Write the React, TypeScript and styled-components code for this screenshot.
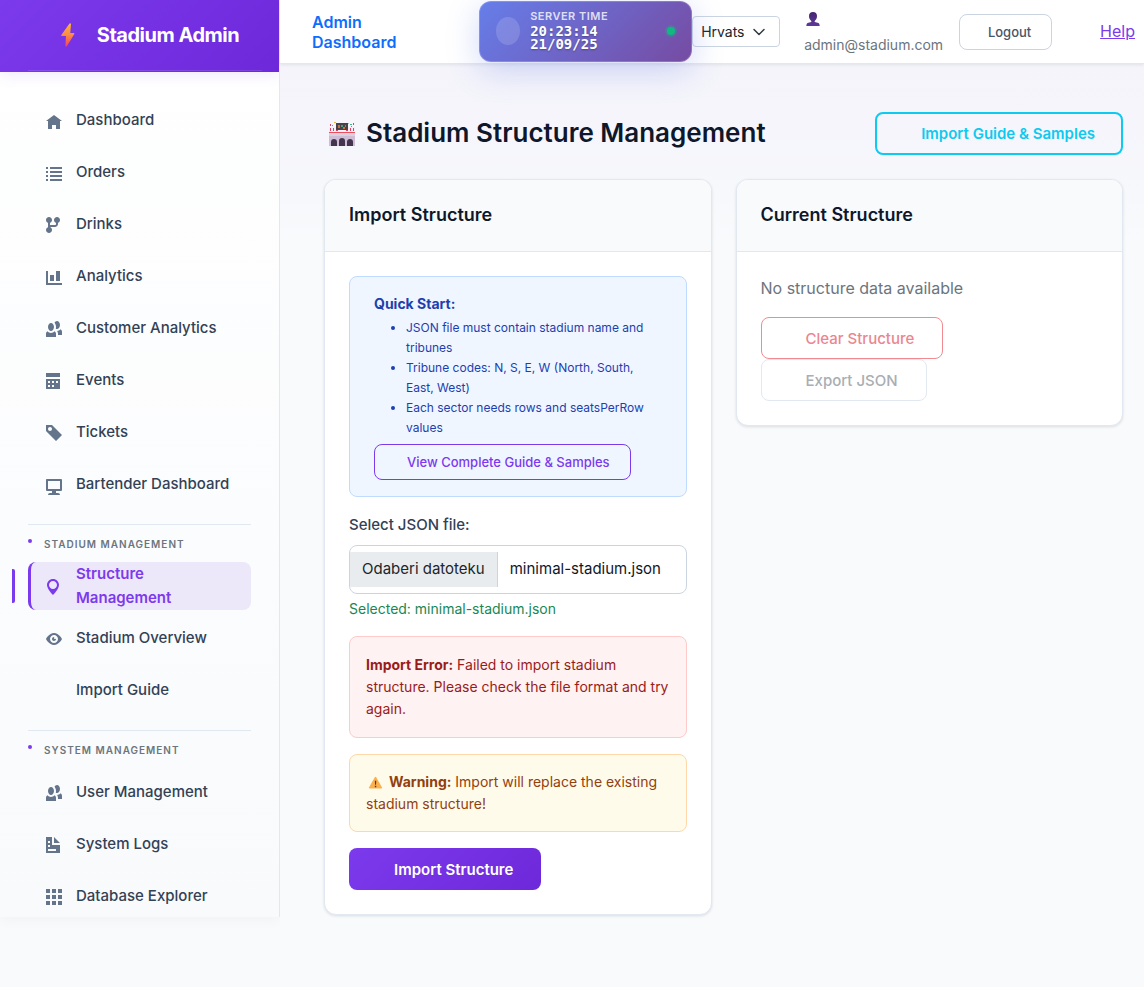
import React from "react";
import styled, { createGlobalStyle, css } from "styled-components";

const GlobalStyle = createGlobalStyle`
  *, *::before, *::after { box-sizing: border-box; }
  body {
    margin: 0;
    background: #f8fafc;
    color: #0f172a;
    font: 400 16px/24px Inter, "Liberation Sans", sans-serif;
  }
  button, select, input { font-family: inherit; }
`;

const Shell = styled.div`
  display: flex;
  align-items: flex-start;
  min-height: 100vh;
`;

const Sidebar = styled.aside`
  flex: none;
  width: 280px;
  height: calc(100vh - 70px);
  overflow: hidden;
  background: linear-gradient(180deg, #ffffff 0%, #f8fafc 100%);
  border-right: 1px solid #e2e8f0;
  box-shadow: 0 4px 12px rgba(15, 23, 42, 0.03);
`;

const Brand = styled.a`
  position: relative;
  display: flex;
  align-items: center;
  justify-content: center;
  gap: 16px;
  height: 72px;
  padding: 0 33px 2px 48px;
  background: linear-gradient(135deg, #7c3aed 0%, #6d28d9 100%);
  box-shadow: 0 4px 12px rgba(124, 58, 237, 0.1);
  color: #ffffff;
  font-size: 20px;
  font-weight: 700;
  letter-spacing: -0.5px;
  text-decoration: none;
  white-space: nowrap;

  &::after {
    content: "";
    position: absolute;
    left: 28px;
    right: 17px;
    bottom: 1px;
    height: 1px;
    background: rgba(255, 255, 255, 0.12);
  }
`;

const Nav = styled.nav`
  padding: 24px 28px;
`;

const NavList = styled.ul`
  display: flex;
  flex-direction: column;
  gap: 4px;
  margin: 0;
  padding: 0;
  list-style: none;
`;

const NavLink = styled.a<{ $active?: boolean }>`
  position: relative;
  display: flex;
  align-items: center;
  gap: 12px;
  height: 48px;
  padding: 0 18px;
  border-radius: 8px;
  color: #334155;
  font-size: 15px;
  font-weight: 500;
  text-decoration: none;

  ${(p) =>
    p.$active &&
    css`
      padding: 0 15px;
      border-left: 3px solid #7c3aed;
      background: #ede7fa;
      color: #7c3aed;
      font-weight: 600;

      &::before {
        content: "";
        position: absolute;
        left: -19px;
        top: 7px;
        width: 3px;
        height: 34px;
        border-radius: 0 2px 2px 0;
        background: #7c3aed;
      }
    `}
`;

const NavIcon = styled.svg<{ $active?: boolean }>`
  flex: none;
  width: 18px;
  height: 18px;
  margin-top: 4px;
  fill: ${(p) => (p.$active ? "#7c3aed" : "#64748b")};
`;

const NavSection = styled.section`
  margin-top: 16px;
  border-top: 1px solid #e2e8f0;
`;

const NavHeading = styled.h2`
  position: relative;
  margin: 0;
  padding: 11px 16px 9px;
  color: #6c757d;
  font-size: 10px;
  font-weight: 600;
  line-height: 17px;
  letter-spacing: 1px;
  text-transform: uppercase;

  &::before {
    content: "";
    position: absolute;
    left: 0;
    top: 14px;
    width: 4px;
    height: 4px;
    border-radius: 50%;
    background: #7c3aed;
  }
`;

const Page = styled.div`
  flex: 1;
  min-width: 0;
  min-height: 100vh;
  background: linear-gradient(180deg, #f3f3f9 0, #f5f5fb 120px, #f8fafc 240px);
`;

const TopBar = styled.header`
  display: flex;
  align-items: center;
  height: 64px;
  padding: 0 9px 0 32px;
  background: #ffffff;
  border-bottom: 1px solid #e2e8f0;
  box-shadow: 0 1px 3px rgba(15, 23, 42, 0.08);
`;

const TopTitle = styled.a`
  flex: 1;
  color: #0d6efd;
  font-weight: 600;
  line-height: 20px;
  text-decoration: none;

  span { display: block; width: min-content; }
`;

const Clock = styled.div`
  position: relative;
  z-index: 1;
  display: flex;
  align-items: center;
  gap: 10px;
  flex: none;
  width: 213px;
  height: 61px;
  margin-bottom: 1px;
  padding: 0 16px;
  border: 1px solid rgba(255, 255, 255, 0.2);
  border-radius: 12px;
  background: linear-gradient(135deg, #667eea 0%, #764ba2 100%) border-box;
  box-shadow: 0 8px 32px rgba(102, 126, 234, 0.3);
  color: #ffffff;
`;

const ClockFace = styled.span`
  width: 24px;
  height: 28px;
  border-radius: 50%;
  background: rgba(255, 255, 255, 0.15);
`;

const ClockText = styled.div`
  flex: 1;
  padding-bottom: 2px;
`;

const ClockLabel = styled.div`
  margin-bottom: 2px;
  color: rgba(255, 255, 255, 0.8);
  font-size: 11px;
  font-weight: 600;
  line-height: 14px;
  letter-spacing: 0.5px;
`;

const ClockValue = styled.time`
  display: block;
  width: 80px;
  font: 700 14px/13px "DejaVu Sans Mono", monospace;
  text-shadow: 0 1px 2px rgba(0, 0, 0, 0.3);
`;

const OnlineDot = styled.span`
  width: 8px;
  height: 8px;
  border-radius: 50%;
  background: #10b981;
  box-shadow: 0 0 0 2px rgba(16, 185, 129, 0.3);
`;

const Language = styled.div`
  position: relative;
  flex: none;

  svg {
    position: absolute;
    right: 15px;
    top: 10px;
    pointer-events: none;
  }
`;

const LanguageSelect = styled.select`
  display: block;
  width: 88px;
  height: 31px;
  padding: 0 34px 0 8px;
  border: 1px solid #cbd5e1;
  border-radius: 4px;
  appearance: none;
  background: #ffffff;
  color: #212529;
  font-size: 14px;
  overflow: hidden;
`;

const Account = styled.div`
  flex: none;
  margin: 0 16px 0 24px;
  padding-top: 4px;
  color: #6c757d;
  font-size: 14px;
  line-height: 20px;

  svg { display: block; margin: 0 0 9px 2px; }
`;

const Logout = styled.button`
  flex: none;
  width: 93px;
  height: 36px;
  padding: 0 0 0 8px;
  border: 1px solid #cbd5e1;
  border-radius: 8px;
  background: #ffffff;
  color: #475569;
  font-size: 13px;
  font-weight: 500;
`;

const Help = styled.a`
  margin-left: 48px;
  padding-bottom: 2px;
  color: #7c3aed;
`;

const Main = styled.main`
  padding: 48px 21px 48px 44px;
`;

const TitleRow = styled.div`
  display: flex;
  align-items: center;
  justify-content: space-between;
  margin-bottom: 24px;
`;

const Title = styled.h1`
  display: flex;
  align-items: center;
  gap: 10px;
  margin: 0;
  padding: 0 0 2px 4px;
  font-size: 26px;
  font-weight: 600;
  line-height: 36px;
`;

const tones = {
  info: { border: "2px solid #0dcaf0", color: "#0dcaf0", weight: 600, end: 26 },
  danger: { border: "1px solid #f18b91", color: "#ea868f", weight: 500, end: 28 },
  muted: { border: "1px solid #e2e8f0", color: "#a9aeb3", weight: 500, end: 28 },
};

const OutlineButton = styled.button<{ $tone: keyof typeof tones }>`
  display: block;
  height: ${(p) => (p.$tone === "info" ? 43 : 42)}px;
  padding: 0 ${(p) => tones[p.$tone].end}px 0 44px;
  border: ${(p) => tones[p.$tone].border};
  border-radius: 8px;
  background: transparent;
  color: ${(p) => tones[p.$tone].color};
  font-size: 15px;
  font-weight: ${(p) => tones[p.$tone].weight};
  white-space: nowrap;
`;

const Cards = styled.div`
  display: grid;
  grid-template-columns: 1fr 1fr;
  align-items: start;
  gap: 24px;
`;

const Card = styled.section`
  overflow: hidden;
  border: 1px solid #e2e8f0;
  border-radius: 12px;
  background: #ffffff;
  box-shadow: 0 1px 3px rgba(15, 23, 42, 0.12);
`;

const CardTitle = styled.h2`
  margin: 0;
  padding: 23px 24px 24px;
  border-bottom: 1px solid #e2e8f0;
  background: #f8fafc;
  font-size: 18px;
  font-weight: 600;
  line-height: 24px;
`;

const CardBody = styled.div`
  padding: 24px;
`;

const QuickStart = styled.div`
  padding: 16px 24px;
  border: 1px solid #bfdbfe;
  border-radius: 8px;
  background: #eff6ff;
  color: #1e40af;
  font-size: 14px;
  line-height: 21px;
`;

const Steps = styled.ul`
  margin: 4px 0 6px;
  padding-left: 32px;
  font-size: 12px;
  line-height: 20px;
`;

const GuideButton = styled.button`
  display: block;
  height: 36px;
  padding: 0 20px 0 32px;
  border: 1px solid #7c3aed;
  border-radius: 8px;
  background: transparent;
  color: #7c3aed;
  font-size: 13px;
  font-weight: 500;
  white-space: nowrap;
`;

const FileLabel = styled.label`
  display: block;
  margin: 16px 0 8px;
  color: #334155;
  font-size: 15px;
  font-weight: 500;
`;

const FilePicker = styled.div`
  display: flex;
  align-items: center;
  height: 49px;
  border: 1px solid #cbd5e1;
  border-radius: 8px;
  background: #ffffff;
`;

const FileButton = styled.button`
  flex: none;
  height: 35px;
  padding: 0 12px 2px;
  border: 0;
  border-right: 1px solid #cbd5e1;
  background: #e9ecef;
  color: #212529;
  font-size: 15px;
`;

const FileName = styled.input`
  flex: 1;
  min-width: 0;
  padding: 0 12px 2px;
  border: 0;
  background: none;
  color: #0f172a;
  font-size: 15px;
  outline: none;
`;

const Selected = styled.p`
  margin: 4px 0 17px;
  color: #198754;
  font-size: 14px;
  line-height: 21px;
`;

const Alert = styled.div<{ $warning?: boolean }>`
  margin-bottom: 16px;
  padding: ${(p) => (p.$warning ? 16 : 17)}px 16px;
  border: 1px solid ${(p) => (p.$warning ? "#fed7aa" : "#fecaca")};
  border-radius: 8px;
  background: ${(p) => (p.$warning ? "#fffbeb" : "#fef2f2")};
  color: ${(p) => (p.$warning ? "#92400e" : "#991b1b")};
  font-size: 14px;
  line-height: 22px;

  svg { margin: 0 6px 0 2px; vertical-align: -2px; }
`;

const ImportButton = styled.button`
  display: block;
  height: 42px;
  padding: 0 28px 0 45px;
  border: 0;
  border-radius: 8px;
  background: linear-gradient(135deg, #7c3aed 0%, #6d28d9 100%);
  color: #ffffff;
  font-size: 15px;
  font-weight: 600;
`;

const Empty = styled.p`
  margin: 0 0 17px;
  color: #6c757d;
`;

const shapes = {
  home: "M4 1l-4 3h1v4h2v-2h2v2h2v-4.03l1 .03-4-3z",
  list: "M0 1v1h1v-1h-1zm2 0v1h6v-1h-6zm-2 2v1h1v-1h-1zm2 0v1h6v-1h-6zm-2 2v1h1v-1h-1zm2 0v1h6v-1h-6zm-2 2v1h1v-1h-1zm2 0v1h6v-1h-6z",
  fork: "M1.5 0c-.83 0-1.5.67-1.5 1.5 0 .66.41 1.2 1 1.41v2.19c-.59.2-1 .75-1 1.41 0 .83.67 1.5 1.5 1.5s1.5-.67 1.5-1.5c0-.6-.34-1.1-.84-1.34.09-.09.21-.16.34-.16h2c.82 0 1.5-.68 1.5-1.5v-.59c.59-.2 1-.75 1-1.41 0-.83-.67-1.5-1.5-1.5s-1.5.67-1.5 1.5c0 .66.41 1.2 1 1.41v.59c0 .28-.22.5-.5.5h-2c-.17 0-.35.04-.5.09v-1.19c.59-.2 1-.75 1-1.41 0-.83-.67-1.5-1.5-1.5z",
  chart: "M0 1v7h8v-1h-7v-6h-1zm5 0v5h2v-5h-2zm-3 2v3h2v-3h-2z",
  people: "M5.5 0c-.51 0-.95.35-1.22.88.45.54.72 1.28.72 2.13 0 .29-.03.55-.09.81.19.11.38.19.59.19.83 0 1.5-.9 1.5-2s-.67-2-1.5-2zm-3 1c-.83 0-1.5.9-1.5 2s.67 2 1.5 2 1.5-.9 1.5-2-.67-2-1.5-2zm4.75 3.16c-.43.51-1.02.82-1.69.84.27.38.44.84.44 1.34v.66h2v-1.66c0-.52-.31-.97-.75-1.19zm-6.5 1c-.44.22-.75.67-.75 1.19v1.66h5v-1.66c0-.52-.31-.97-.75-1.19-.45.53-1.06.84-1.75.84s-1.3-.32-1.75-.84z",
  calendar: "M0 0v2h7v-2h-7zm0 3v4.91c0 .05.04.09.09.09h6.81c.05 0 .09-.04.09-.09v-4.91h-7zm1 1h1v1h-1v-1zm2 0h1v1h-1v-1zm2 0h1v1h-1v-1zm-4 2h1v1h-1v-1zm2 0h1v1h-1v-1z",
  tag: "M0 0v3l5 5 3-3-5-5h-3zm2 1c.55 0 1 .45 1 1s-.45 1-1 1-1-.45-1-1 .45-1 1-1z",
  monitor: "M.34 1a.5.5 0 0 0-.34.5v5a.5.5 0 0 0 .5.5h2.5v1h-1c-.55 0-1 .45-1 1h6c0-.55-.45-1-1-1h-1v-1h2.5a.5.5 0 0 0 .5-.5v-5a.5.5 0 0 0-.5-.5h-7zm.66 1h6v4h-6v-4z",
  marker: "M3.5 0c-1.66 0-3 1.34-3 3 0 2 3 5 3 5s3-3 3-5c0-1.66-1.34-3-3-3zm0 1c1.11 0 2 .9 2 2 0 1.11-.89 2-2 2-1.1 0-2-.89-2-2 0-1.1.9-2 2-2z",
  eye: "M4.03 1c-2.53 0-4.03 3-4.03 3s1.5 3 4.03 3c2.47 0 3.97-3 3.97-3s-1.5-3-3.97-3zm-.03 1c1.11 0 2 .9 2 2 0 1.11-.89 2-2 2-1.1 0-2-.89-2-2 0-1.1.9-2 2-2zm0 1c-.55 0-1 .45-1 1s.45 1 1 1 1-.45 1-1c0-.1-.04-.19-.06-.28-.08.16-.24.28-.44.28-.28 0-.5-.22-.5-.5 0-.2.12-.36.28-.44-.09-.03-.18-.06-.28-.06z",
  document: "M0 0v8h7v-4h-4v-4h-3zm4 0v3h3l-3-3zm-3 2h1v1h-1v-1zm0 2h1v1h-1v-1zm0 2h4v1h-4v-1z",
  grid: "M0 0v2h2v-2h-2zm3 0v2h2v-2h-2zm3 0v2h2v-2h-2zm-6 3v2h2v-2h-2zm3 0v2h2v-2h-2zm3 0v2h2v-2h-2zm-6 3v2h2v-2h-2zm3 0v2h2v-2h-2zm3 0v2h2v-2h-2z",
  none: "",
};

type Item = { label: string; icon: keyof typeof shapes; active?: boolean };

const primary: Item[] = [
  { label: "Dashboard", icon: "home" },
  { label: "Orders", icon: "list" },
  { label: "Drinks", icon: "fork" },
  { label: "Analytics", icon: "chart" },
  { label: "Customer Analytics", icon: "people" },
  { label: "Events", icon: "calendar" },
  { label: "Tickets", icon: "tag" },
  { label: "Bartender Dashboard", icon: "monitor" },
];

const stadium: Item[] = [
  { label: "Structure Management", icon: "marker", active: true },
  { label: "Stadium Overview", icon: "eye" },
  { label: "Import Guide", icon: "none" },
];

const system: Item[] = [
  { label: "User Management", icon: "people" },
  { label: "System Logs", icon: "document" },
  { label: "Database Explorer", icon: "grid" },
];

function Items({ items }: { items: Item[] }) {
  return (
    <NavList>
      {items.map(({ label, icon, active }) => (
        <li key={label}>
          <NavLink href="#" $active={active} aria-current={active ? "page" : undefined}>
            <NavIcon viewBox="0 0 9 9" $active={active} aria-hidden="true">
              <path d={shapes[icon]} />
            </NavIcon>
            <span>{label}</span>
          </NavLink>
        </li>
      ))}
    </NavList>
  );
}

function Bolt() {
  return (
    <svg width="26" height="26" viewBox="0 0 26 26" aria-hidden="true">
      <defs>
        <linearGradient id="bolt" x1="0" y1="0" x2="0" y2="1">
          <stop offset="0" stopColor="#fcb53b" />
          <stop offset="0.5" stopColor="#fb8b45" />
          <stop offset="1" stopColor="#f4415f" />
        </linearGradient>
      </defs>
      <path d="M14.500 1.500 6.300 13q-.4.900.5.900H11l-.6 10q.6 1.200 1.600 0L19.300 12q.4-.9-.6-.9H15.300L16 2q-.5-1.200-1.500-.5z" fill="url(#bolt)" />
    </svg>
  );
}

function StadiumIcon() {
  return (
    <svg width="28" height="28" viewBox="0 0 28 28" aria-hidden="true">
      <path d="M1 8h26v5H1z" fill="#f6eef4" />
      <path d="M8 4h12v7H8z" fill="#4a4148" />
      <path d="M10 6h2v3h-2zM15 8h2v2h-2z" fill="#c8703a" />
      <path d="M13 6h2v2h-2zM17 6h1v2h-1z" fill="#3fa67b" />
      <path d="M2 5h1v2H2zM5 9h1v3H5zM22 9h1v3h-1zM25 4h1v2h-1zM2 9h1v3H2zM25 9h1v3h-1zM8 11h2v1H8zM18 11h2v1h-2z" fill="#d8446a" />
      <path d="M4 6h1v1H4zM22 5h2v1h-2zM23 7h1v1h-1z" fill="#3fb68b" />
      <path d="M6 3h2v1H6zM20 4h1v1h-1z" fill="#f0b63c" />
      <path d="M1 13h26v14H1z" fill="#cfbdd6" />
      <path d="M1 13h26v1H1z" fill="#e8525f" />
      <path d="M1 14h26v3H1z" fill="#dccfe0" />
      <path d="M3 27v-4a3 3 0 0 1 6 0v4zM11 27v-5a3 3 0 0 1 6 0v5zM19 27v-4a3 3 0 0 1 6 0v4z" fill="#44344f" />
    </svg>
  );
}

function PersonIcon() {
  return (
    <svg width="14" height="14" viewBox="0 0 14 14" aria-hidden="true">
      <defs>
        <linearGradient id="person" x1="0" y1="0" x2="0" y2="1">
          <stop offset="0" stopColor="#452470" />
          <stop offset="1" stopColor="#5d3a9a" />
        </linearGradient>
      </defs>
      <path d="M7 0C4.500 0 3 1.600 3 4c0 2.500 1 4 2.300 4.900v1L1.500 11Q.4 11.400.3 14h13.400q-.1-2.600-1.200-3L8.700 9.900v-1C10 8 11 6.500 11 4c0-2.400-1.500-4-4-4z" fill="url(#person)" />
    </svg>
  );
}

function WarningIcon() {
  return (
    <svg width="15" height="13" viewBox="0 0 15 14" aria-hidden="true">
      <path d="M6.600 1.500q.9-1.200 1.800 0l6 10.500q.4 1.300-.9 1.500h-12Q.2 13.300.6 12z" fill="#fbb04c" />
      <path d="M6.800 5h1.500l-.2 4.500h-1zM6.800 10.500h1.500V12H6.800z" fill="#4a3540" />
    </svg>
  );
}

export default function App() {
  return (
    <>
      <GlobalStyle />
      <Shell>
        <Sidebar>
          <Brand href="#">
            <Bolt />
            Stadium Admin
          </Brand>
          <Nav aria-label="Main">
            <Items items={primary} />
            <NavSection>
              <NavHeading>Stadium Management</NavHeading>
              <Items items={stadium} />
            </NavSection>
            <NavSection>
              <NavHeading>System Management</NavHeading>
              <Items items={system} />
            </NavSection>
          </Nav>
        </Sidebar>
        <Page>
          <TopBar>
            <TopTitle href="#">
              <span>Admin Dashboard</span>
            </TopTitle>
            <Clock>
              <ClockFace />
              <ClockText>
                <ClockLabel>SERVER TIME</ClockLabel>
                <ClockValue>20:23:14 21/09/25</ClockValue>
              </ClockText>
              <OnlineDot />
            </Clock>
            <Language>
              <LanguageSelect aria-label="Language" defaultValue="hr">
                <option value="hr">Hrvatski</option>
                <option value="en">English</option>
              </LanguageSelect>
              <svg width="12" height="12" viewBox="0 0 12 12" fill="none" stroke="#343a40" strokeWidth="1.500" strokeLinecap="round" strokeLinejoin="round" aria-hidden="true">
                <path d="M1 3.500l5 5 5-5" />
              </svg>
            </Language>
            <Account>
              <PersonIcon />
              admin@stadium.com
            </Account>
            <Logout type="button">Logout</Logout>
            <Help href="#">Help</Help>
          </TopBar>
          <Main>
            <TitleRow>
              <Title>
                <StadiumIcon />
                Stadium Structure Management
              </Title>
              <OutlineButton type="button" $tone="info">Import Guide &amp; Samples</OutlineButton>
            </TitleRow>
            <Cards>
              <Card>
                <CardTitle>Import Structure</CardTitle>
                <CardBody>
                  <QuickStart>
                    <strong>Quick Start:</strong>
                    <Steps>
                      <li>JSON file must contain stadium name and tribunes</li>
                      <li>Tribune codes: N, S, E, W (North, South, East, West)</li>
                      <li>Each sector needs rows and seatsPerRow values</li>
                    </Steps>
                    <GuideButton type="button">View Complete Guide &amp; Samples</GuideButton>
                  </QuickStart>
                  <FileLabel htmlFor="structure-file">Select JSON file:</FileLabel>
                  <FilePicker>
                    <FileButton type="button">Odaberi datoteku</FileButton>
                    <FileName id="structure-file" type="text" readOnly value="minimal-stadium.json" />
                  </FilePicker>
                  <Selected>Selected: minimal-stadium.json</Selected>
                  <Alert role="alert">
                    <strong>Import Error:</strong> Failed to import stadium structure. Please check the file format and try again.
                  </Alert>
                  <Alert $warning>
                    <WarningIcon />
                    <strong>Warning:</strong> Import will replace the existing stadium structure!
                  </Alert>
                  <ImportButton type="button">Import Structure</ImportButton>
                </CardBody>
              </Card>
              <Card>
                <CardTitle>Current Structure</CardTitle>
                <CardBody>
                  <Empty>No structure data available</Empty>
                  <OutlineButton type="button" $tone="danger" disabled>Clear Structure</OutlineButton>
                  <OutlineButton type="button" $tone="muted" disabled>Export JSON</OutlineButton>
                </CardBody>
              </Card>
            </Cards>
          </Main>
        </Page>
      </Shell>
    </>
  );
}
